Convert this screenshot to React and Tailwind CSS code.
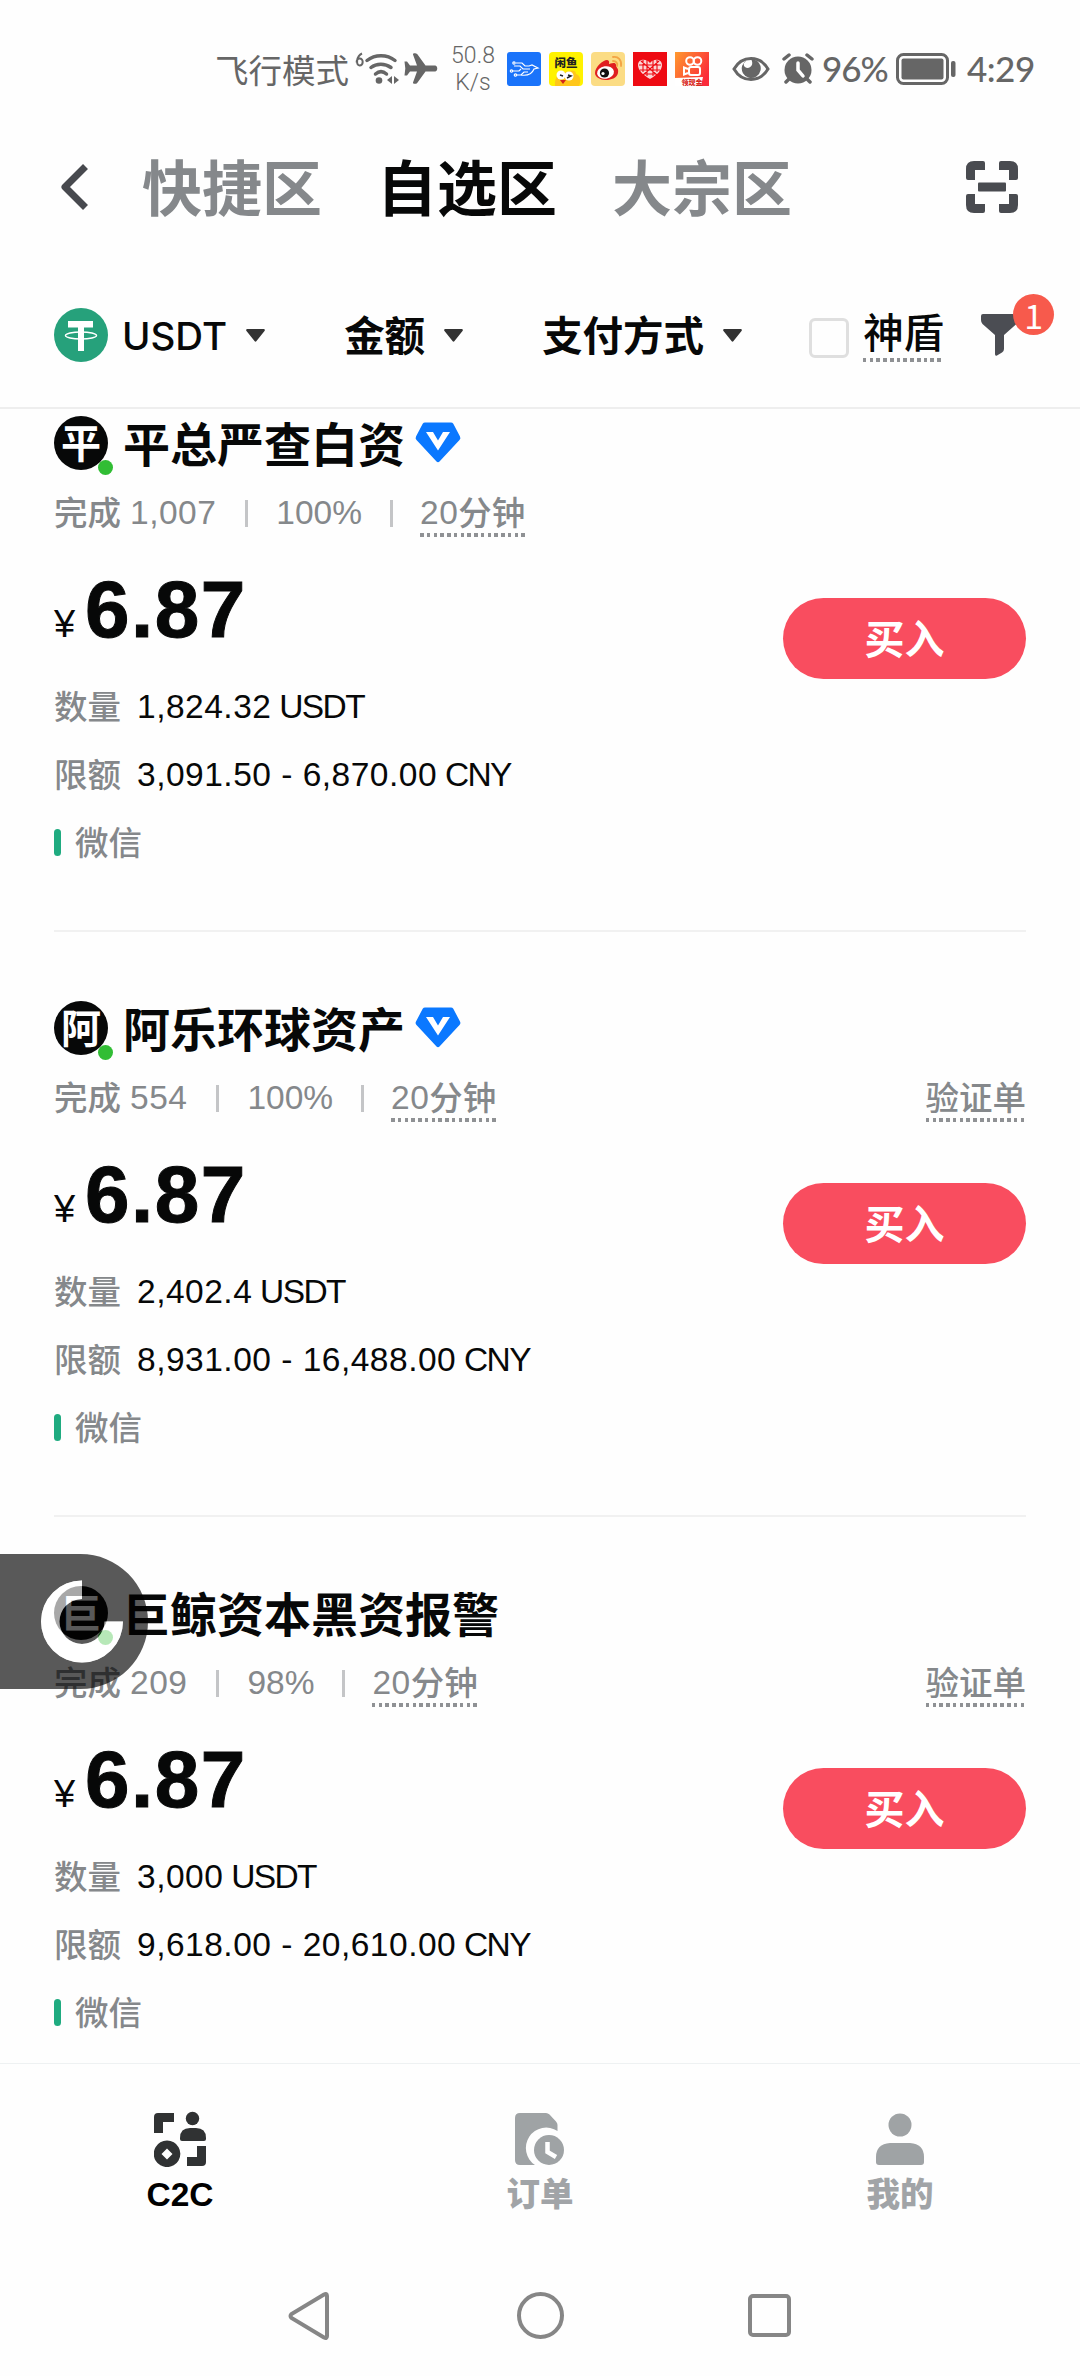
import React from 'react';

const offers = [
    { name: '平总严查白资', verified: true, orders: '1,007', rate: '100%', amount: '1,824.32', limit: '3,091.50 - 6,870.00', proof: false },
    { name: '阿乐环球资产', verified: true, orders: '554', rate: '100%', amount: '2,402.4', limit: '8,931.00 - 16,488.00', proof: true },
    { name: '巨鲸资本黑资报警', verified: false, orders: '209', rate: '98%', amount: '3,000', limit: '9,618.00 - 20,610.00', proof: true },
];

function Dotted({ children, className = '' }) {
    return (
        <span className={`flex flex-col ${className}`}>
            {children}
            <span className="h-1 bg-[repeating-linear-gradient(90deg,#8f9194_0_3.5px,transparent_3.5px_6.75px)]" />
        </span>
    );
}

function Caret({ className = '' }) {
    return (
        <svg width="19" height="13" viewBox="0 0 19 13" className={className}>
            <path d="M1 0H18Q19.5 0.5 18.5 2L10.5 12Q9.5 13.5 8.5 12L0.5 2Q-0.5 0.5 1 0Z" fill="#333" />
        </svg>
    );
}

function AppIcons() {
    return (
        <div className="ml-3 flex gap-2">
            <svg width="34" height="34" viewBox="0 0 34 34">
                <rect width="34" height="34" rx="3" fill="#1a73fa" />
                <g fill="none" stroke="#fff" strokeWidth="1.2">
                    <path d="M9 11h6l3 3h4l3-1 6 3-4 1c-2 5-6 7-13 6" />
                    <path d="M7 14h6l3 3h7M6 19h6l2-2M10 23h4l3-3h4" />
                    <circle cx="7" cy="11" r="1.2" />
                    <circle cx="4.500" cy="19" r="1.200" />
                    <circle cx="8.500" cy="23" r="1.200" />
                </g>
            </svg>
            <svg width="34" height="34" viewBox="0 0 34 34">
                <rect width="34" height="34" rx="4" fill="#fff200" />
                <path d="M6 34C5 24 12 19 19 20c5-3 8-1 8 2 5 1 5 8 3 12Z" fill="#ffc61a" />
                <circle cx="12" cy="23" r="4.500" fill="#fff" />
                <circle cx="20" cy="24" r="4.500" fill="#fff" />
                <path d="M11 23l3 1M18 26l4-2-3-1" stroke="#222" strokeWidth="1.500" fill="none" />
                <path d="M11 28h6l-3 4Z" fill="#d3261c" />
                <text x="17" y="14.500" fontSize="11.500" fontWeight="900" textAnchor="middle" fill="#222" fontFamily="Noto Sans CJK SC">闲鱼</text>
            </svg>
            <svg width="34" height="34" viewBox="0 0 34 34">
                <rect width="34" height="34" rx="4" fill="#fbdc84" />
                <path d="M4 21c0-6 8-13 12-13 3 0 2 4 2 4s7-3 7 1c0 3 3 3 2 8-1 5-7 7-12 7-6 0-11-3-11-7Z" fill="#e01e20" />
                <ellipse cx="14.500" cy="20.500" rx="8.500" ry="6.200" fill="#fff" transform="rotate(-8 14.500 20.500)" />
                <circle cx="13.500" cy="21" r="4.600" fill="#111" />
                <circle cx="12" cy="21.500" r="1.600" fill="#fff" />
                <path d="M22 5c5-1 9 3 8 9M22 9c3 0 5 2 4 5" stroke="#f3a545" strokeWidth="1.800" fill="none" strokeLinecap="round" />
            </svg>
            <svg width="34" height="34" viewBox="0 0 34 34">
                <rect width="34" height="34" fill="#ee0a12" />
                <path d="M17 27C10 23 5 18 5 13c0-6 8-7 12-2 4-5 12-4 12 2 0 5-5 10-12 14Z" fill="#fbd5d5" />
                <path d="M10 8v12M14 8v16M20 8v16M24 8v12M6 13h22M7 18h20M12 22h10M8 9l16 14M26 9L10 23" stroke="#ee0a12" strokeWidth="1.100" />
            </svg>
            <svg width="34" height="34" viewBox="0 0 34 34">
                <defs>
                    <linearGradient id="video" x1="0" y1="0" x2="1" y2="0.600">
                        <stop offset="0" stopColor="#ff9a2e" />
                        <stop offset="1" stopColor="#fb2b3a" />
                    </linearGradient>
                </defs>
                <rect width="34" height="34" fill="url(#video)" />
                <path d="M0 26l28-1-2 9H0Z" fill="#fff" />
                <g fill="none" stroke="#fff" strokeWidth="2">
                    <circle cx="15" cy="9" r="3.800" />
                    <circle cx="22.500" cy="9" r="3.800" />
                    <rect x="14" y="15" width="11" height="8" rx="2" />
                    <path d="M13 17l-4-1.500v7L13 21" />
                </g>
                <text x="17" y="32.500" fontSize="7" fontWeight="900" textAnchor="middle" fill="#d8281c" fontFamily="Noto Sans CJK SC">领现金</text>
            </svg>
        </div>
    );
}

function StatusBar() {
    return (
        <div className="flex h-[137px] items-center pl-[215px] text-[#666]">
            <span className="font-['Noto_Sans_CJK_SC'] text-[33.5px] leading-none">飞行模式</span>
            <svg width="45" height="34" viewBox="0 0 45 34" className="ml-1.5" fill="none" stroke="#666">
                <path d="M7 1.500C1.500 4 .5 13.500 4.500 13.500c4 0 4.500-7 0-7-2 0-3 2-2.800 4" strokeWidth="2" />
                <path d="M12 8.500c8-6.500 20-6.500 28 0M16 15.500c5.500-4.500 14-4.500 20 0M20.500 22c3.500-3 7.500-3 11 0" strokeWidth="3.500" strokeLinecap="round" />
                <circle cx="24" cy="28.500" r="3.300" fill="#666" stroke="none" />
                <path d="M37 24v8l-5-4ZM39 24v8l5-4Z" fill="#666" stroke="none" />
            </svg>
            <svg width="34" height="31" viewBox="0 0 34 31" className="ml-1" fill="#666">
                <path d="M31 12.500H21.500L13 .8C12 0 8.500-.3 9 1.500l4 11H6L3 8.500H.5l.8 7-.8 7H3l3-4h7l-4 11c-.5 1.800 3 1.500 4 .7l8.500-11.700H31c3 0 3-6 0-6Z" />
            </svg>
            <div className="ml-[13px] w-[44px] text-center font-['Roboto'] text-[23px] leading-[27px] font-light">
                <div>50.8</div>
                <div>K/s</div>
            </div>
            <AppIcons />
            <svg width="38" height="26" viewBox="0 0 38 26" className="ml-[23px]">
                <path d="M2 13C10-1 28-1 36 13 28 27 10 27 2 13Z" fill="none" stroke="#666" strokeWidth="3" />
                <path d="M15 4a9.500 9.500 0 1 0 12 3C25 4 21 3 19 3c2 3 2 8-3 9-3 0-5-2-4-5" fill="#666" />
            </svg>
            <svg width="34" height="31" viewBox="0 0 34 31" className="ml-[11px]">
                <circle cx="17" cy="17" r="13.500" fill="#666" />
                <path d="M3 6l5-4M31 6l-5-4M5 29l4-4M29 29l-4-4" stroke="#666" strokeWidth="3.500" strokeLinecap="round" />
                <path d="M17 10v7l5 6" stroke="#fff" strokeWidth="3.500" fill="none" strokeLinecap="round" />
            </svg>
            <span className="ml-[7px] w-[66px] font-['Lato'] text-[35px] leading-none font-medium tracking-[-1px]">96%</span>
            <svg width="60" height="32" viewBox="0 0 60 32" className="ml-2">
                <rect x="1.500" y="1.500" width="50" height="29" rx="6" fill="none" stroke="#666" strokeWidth="3" />
                <rect x="5.500" y="5.500" width="42" height="21" rx="2" fill="#666" />
                <rect x="55" y="8" width="4.500" height="16" rx="2" fill="#666" />
            </svg>
            <span className="ml-[11px] font-['Lato'] text-[35px] leading-none font-medium tracking-[-0.5px]">4:29</span>
        </div>
    );
}

function Header() {
    return (
        <div className="flex h-[102px] items-center pr-[62px] pb-[3px] pl-[60px]">
            <svg width="28" height="46" viewBox="0 0 28 46" fill="none" stroke="#47494e" strokeWidth="7">
                <path d="M25.500 2.500L5 23l20.500 20.500" strokeLinejoin="round" />
            </svg>
            <div className="ml-[54px] flex gap-[55px] pb-[3px] font-['Noto_Sans_CJK_SC'] text-[60px] leading-[86px] font-bold text-[#85888b]">
                <span>快捷区</span>
                <span className="text-[#070808]">自选区</span>
                <span>大宗区</span>
            </div>
            <svg width="52" height="52" viewBox="0 0 52 52" className="ml-auto" fill="#494b50">
                <path d="M8 0H17Q19 0 19 2V9H9V19H2Q0 19 0 17V8Q0 0 8 0ZM44 0H35Q33 0 33 2V9H43V19H50Q52 19 52 17V8Q52 0 44 0ZM8 52H17Q19 52 19 50V43H9V33H2Q0 33 0 35V44Q0 52 8 52ZM44 52H35Q33 52 33 50V43H43V33H50Q52 33 52 35V44Q52 52 44 52Z" />
                <rect x="12" y="21.500" width="28" height="9" rx="1" />
            </svg>
        </div>
    );
}

function Filters() {
    return (
        <div className="flex h-[170px] items-center border-b-2 border-[#eee] pt-6 pl-[54px] font-['Noto_Sans_CJK_SC'] text-[40.5px] leading-[54px] font-bold text-[#070808]">
            <svg width="54" height="54" viewBox="0 0 54 54">
                <circle cx="27" cy="27" r="27" fill="#26a17b" />
                <path d="M14 13H39V19.500H30V43H24V19.500H14Z" fill="#fff" />
                <ellipse cx="27" cy="27.500" rx="15.500" ry="3.600" fill="none" stroke="#fff" strokeWidth="1.500" />
            </svg>
            <span className="ml-[14px] pt-0.5 font-['Inter'] text-[38.5px] font-medium">USDT</span>
            <Caret className="ml-[19px]" />
            <span className="ml-[79px] pb-0.5">金额</span>
            <Caret className="ml-[19px]" />
            <span className="ml-[79px] pb-0.5">支付方式</span>
            <Caret className="ml-[19px]" />
            <span className="mt-1.5 ml-[67px] h-10 w-10 rounded-md border-3 border-[#dfdfdf]" />
            <Dotted className="ml-[14px] pb-1 font-medium">神盾</Dotted>
            <div className="relative ml-[37px]">
                <svg width="38" height="42" viewBox="0 0 38 42" fill="#4b4d53">
                    <path d="M2 0H36Q38 0 38 2V6Q38 8 36 9.500L23 21V35Q23 37 21 38.500L16 41.500Q14 42.500 14 40V21L1.500 10Q0 8.500 0 6V2Q0 0 2 0Z" />
                </svg>
                <span className="absolute -top-5 left-8 flex h-[41px] w-[41px] items-center justify-center rounded-full bg-[#f75a4c] text-[34px] leading-[41px] font-normal text-white">1</span>
            </div>
        </div>
    );
}

function Gem() {
    return (
        <svg width="46" height="41" viewBox="0 0 46 41" className="mb-0.5 ml-2.5">
            <path d="M10 .5H36Q37.500 .5 38.300 1.800L45 14.500Q46 16.500 44.500 18L24.500 39.500Q23 41 21.500 39.500L1.500 18Q0 16.500 1 14.500L7.700 1.800Q8.500 .5 10 .5Z" fill="#0a78ff" />
            <path d="M11 10H18L23 18.500 28 10H35L23 28.500Z" fill="#fff" />
        </svg>
    );
}

function Field({ label, value, unit }) {
    return (
        <div className="flex h-[68px] items-center">
            <span className="pb-0.5 font-['Noto_Sans_CJK_SC'] text-[33.5px] leading-[48px] font-medium text-[#85888b]">{label}</span>
            <span className="ml-4 pt-px text-[33.5px] leading-[48px] tracking-[0.5px] text-[#070808]">
                {value} <span className="-ml-0.5 tracking-[-1.6px]">{unit}</span>
            </span>
        </div>
    );
}

function Offer({ offer, first, last }) {
    return (
        <div className={first ? 'pt-[7px]' : 'pt-[69px]'}>
            <div className="flex h-[54px] items-center">
                <div className="relative h-[54px] w-[54px] rounded-full bg-[#070808] text-center font-['Noto_Sans_CJK_SC'] text-[40px] leading-[50px] font-bold text-white">
                    {offer.name[0]}
                    <span className="absolute -right-[5px] -bottom-[5px] h-[15px] w-[15px] rounded-full bg-[#31bd34]" />
                </div>
                <span className="ml-[15px] pb-0.5 font-['Noto_Sans_CJK_SC'] text-[47px] leading-[54px] font-bold text-[#070808]">{offer.name}</span>
                {offer.verified && <Gem />}
            </div>
            <div className="mt-[19px] flex h-12 items-start font-['Noto_Sans_CJK_SC'] text-[33.5px] leading-[44px] font-medium text-[#85888b]">
                <span>完成</span>
                <span className="ml-[9px] pt-0.5 font-['Liberation_Sans'] font-normal tracking-[0.5px]">{offer.orders}</span>
                <span className="mt-[11px] ml-[29px] h-[27px] w-[3px] bg-[#c4c5c7]" />
                <span className="ml-[28px] pt-0.5 font-['Liberation_Sans'] font-normal">{offer.rate}</span>
                <span className="mt-[11px] ml-[28px] h-[27px] w-[3px] bg-[#c4c5c7]" />
                <Dotted className="ml-[27px]">
                    <span className="flex h-11"><span className="pt-0.5 font-['Liberation_Sans'] font-normal tracking-[0.5px]">20</span>分钟</span>
                </Dotted>
                {offer.proof && <Dotted className="ml-auto">验证单</Dotted>}
            </div>
            <div className="flex items-start justify-between">
                <div>
                    <div className="flex h-[135px] items-baseline text-[#070808]">
                        <span className="w-[31px] text-[38px]">¥</span>
                        <span className="text-[80px] leading-[146px] font-bold tracking-[1.5px] [-webkit-text-stroke:1px_#070808]">6.87</span>
                    </div>
                    <Field label="数量" value={offer.amount} unit="USDT" />
                    <Field label="限额" value={offer.limit} unit="CNY" />
                    <div className="flex h-[68px] items-center">
                        <span className="h-[27px] w-[7px] rounded-full bg-[#1fab80]" />
                        <span className="ml-[14px] pb-0.5 font-['Noto_Sans_CJK_SC'] text-[33.5px] leading-[48px] font-medium text-[#85888b]">微信</span>
                    </div>
                </div>
                <button className="mt-[61px] h-[81px] w-[243px] rounded-full bg-[#f94d5f] pb-[3px] font-['Noto_Sans_CJK_SC'] text-[40px] leading-[78px] font-bold text-white">买入</button>
            </div>
            {!last && <div className="mt-[54px] h-0.5 bg-[#f1f1f1]" />}
        </div>
    );
}

// translucent handle docked to the left edge of the screen
function FloatingHandle() {
    return (
        <svg width="148" height="135" viewBox="0 0 148 135" className="absolute top-[1554px] left-0">
            <path fillRule="evenodd" fill="#000" fillOpacity="0.650" d="M0 0H80.500A67.500 67.500 0 0 1 80.500 135H0ZM82 26.500A41 41 0 1 0 123 67.500H104.500A22.500 22.500 0 1 1 82 45Z" />
            <path fill="#fff" fillOpacity="0.650" d="M82 26.500A41 41 0 1 0 123 67.500H104.500A22.500 22.500 0 1 1 82 45Z" />
        </svg>
    );
}

function TabBar() {
    return (
        <div className="grid h-[171px] grid-cols-3 border-t border-[#eef1f2] pt-[47px] font-['Noto_Sans_CJK_SC'] text-[33.5px] leading-[50px] font-black text-[#a1a4a7]">
            <div className="flex flex-col items-center">
                <svg width="52" height="56" viewBox="0 0 52 56" fill="#303233">
                    <path d="M4 2H20V11H9V22H0V6Q0 2 4 2ZM52 35V51Q52 55 48 55H33V46H43V35Z" />
                    <circle cx="38.500" cy="7.500" r="6.700" />
                    <path d="M36 17H42Q52 17 52 27V28Q52 30 50 30H28Q26 30 26 28V27Q26 17 36 17Z" />
                    <path fillRule="evenodd" d="M13 29.500a13.300 13.300 0 1 0 .1 0ZM13 37.500L18.500 43 13 48.500 7.500 43Z" />
                </svg>
                <span className="font-['Liberation_Sans'] leading-[56px] text-black">C2C</span>
            </div>
            <div className="flex flex-col items-center">
                <svg width="50" height="56" viewBox="0 0 50 56" fill="#9fa3a5">
                    <path d="M5 2H31Q33 2 34.500 3.500L41 10.500Q42.500 12 42.500 14V20A19.500 19.500 0 0 0 20 54H5Q0 54 0 49V7Q0 2 5 2Z" />
                    <circle cx="34" cy="39" r="15" />
                    <path d="M32.500 31V41L41 46" fill="none" stroke="#fff" strokeWidth="4.500" />
                </svg>
                <span>订单</span>
            </div>
            <div className="flex flex-col items-center">
                <svg width="48" height="56" viewBox="0 0 48 56" fill="#9fa3a5">
                    <circle cx="24" cy="14" r="11.500" />
                    <path d="M14 32H34Q48 33 48 46V51Q48 54 45 54H3Q0 54 0 51V46Q0 33 14 32Z" />
                </svg>
                <span>我的</span>
            </div>
        </div>
    );
}

function SystemNav() {
    return (
        <div className="flex h-[142px] items-center pt-[21px] pl-[288px]">
            <svg width="41" height="48" viewBox="0 0 41 48" fill="none" stroke="#868686" strokeWidth="4">
                <path d="M39 4V44Q39 47 36 45.500L3.500 26Q1.500 24 3.500 22L36 2.500Q39 1 39 4Z" />
            </svg>
            <span className="ml-[188px] h-[47px] w-[47px] rounded-full border-4 border-[#868686]" />
            <span className="ml-[184px] h-[43px] w-[43px] rounded-[5px] border-4 border-[#868686]" />
        </div>
    );
}

export default function App() {
    return (
        <div className="relative flex h-[2376px] w-[1080px] flex-col overflow-hidden bg-[#fefefe] font-['Liberation_Sans','Noto_Sans_CJK_SC',sans-serif]">
            <StatusBar />
            <Header />
            <Filters />
            <div className="h-[1654px] px-[54px]">
                {offers.map((offer, i) => (
                    <Offer key={offer.name} offer={offer} first={i === 0} last={i === offers.length - 1} />
                ))}
            </div>
            <TabBar />
            <SystemNav />
            <FloatingHandle />
        </div>
    );
}
